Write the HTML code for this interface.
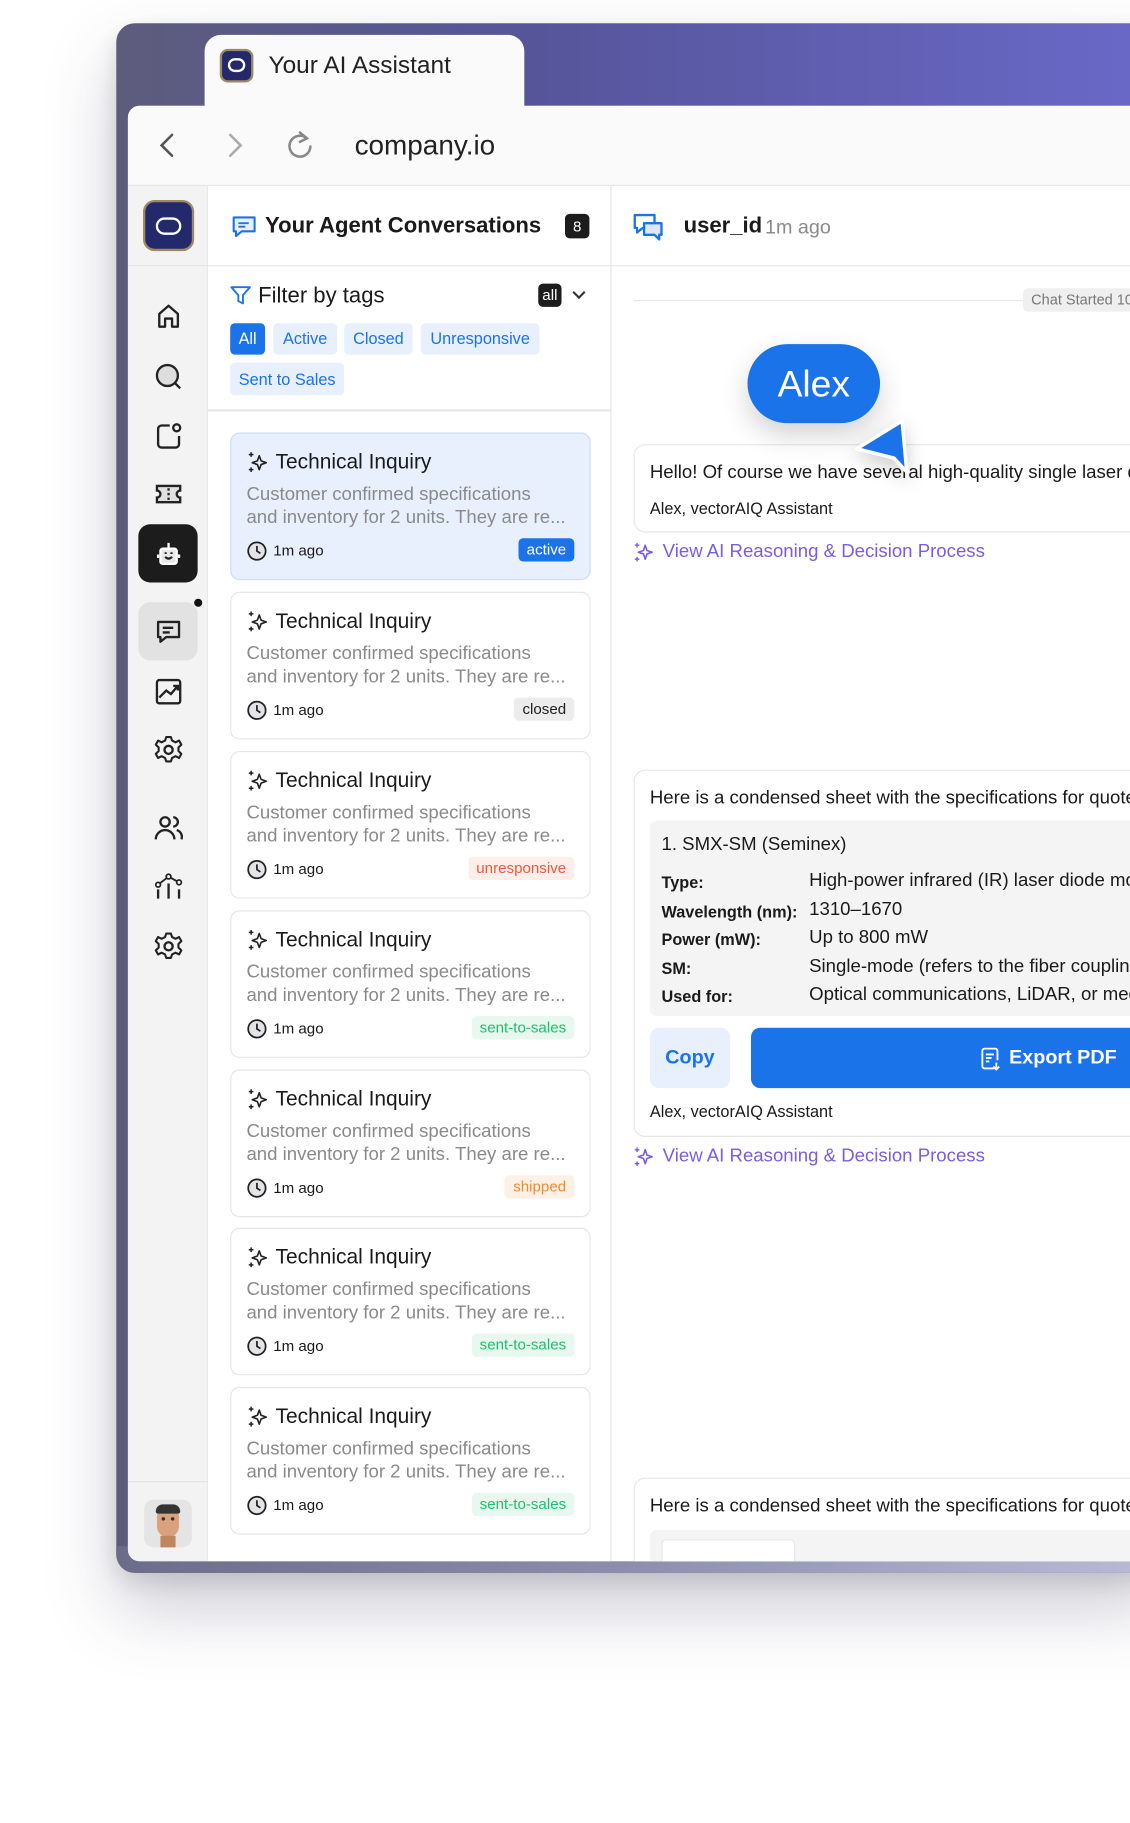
<!DOCTYPE html>
<html><head><meta charset="utf-8"><style>
*{box-sizing:border-box;margin:0;padding:0}
html,body{width:1130px;height:1822px;overflow:hidden;background:#fff;font-family:"Liberation Sans",sans-serif;color:#1a1a1a}
#w{position:absolute;left:0;top:0;width:972px;height:1568px;transform:scale(1.16255);transform-origin:0 0}
.a{position:absolute}
.frame{left:100px;top:20px;width:900px;height:1333px;border-radius:16px;background:linear-gradient(90deg,#5d5c7c 0%,#56559a 40%,#6a69c9 100%);box-shadow:0 30px 60px rgba(60,60,90,.25),0 8px 20px rgba(0,0,0,.12)}
.frameb{left:100px;top:1330px;width:900px;height:23px;border-radius:0 0 16px 16px;background:linear-gradient(90deg,#6b6b8a,#8e8fb0 50%,#b9bbd6)}
.tab{left:176px;top:30px;width:275px;height:64px;background:#fafafa;border-radius:14px 14px 0 0}
.win{left:110px;top:91px;width:900px;height:1252px;background:#fff;border-radius:10px 0 0 10px;overflow:hidden}
.addr{left:0;top:0;width:900px;height:69px;background:#fafafa;border-bottom:1px solid #e6e6e6}
.side{left:0;top:69px;width:69px;height:1183px;background:#f3f3f3;border-right:1px solid #e8e8e8}
.ic{position:absolute;left:22px;width:26px;height:26px}
.conv{left:69px;top:69px;width:347px;height:1183px;border-right:1px solid #e6e6e6;background:#fff}
.tag{position:absolute;height:27px;border-radius:4px;background:#e8f0fe;color:#1a73e8;font-size:14px;line-height:27px;text-align:center}
.card{position:absolute;left:19px;width:310px;height:127px;border:1.5px solid #e6e6e6;border-radius:8px;background:#fff}
.card .t{position:absolute;left:38px;top:14px;font-size:18px}
.card .d{position:absolute;left:13px;top:43px;font-size:16px;color:#8a8a8a;line-height:19.5px;width:295px;white-space:nowrap}
.card .f{position:absolute;left:36px;top:93px;font-size:13px}
.card .b{position:absolute;right:13px;top:90px;height:20px;padding:0 7px;border-radius:4px;font-size:13px;line-height:20px}
.card svg{position:absolute}
.s1{left:13px;top:15px}.s2{left:13px;top:92px}
.chat{left:416px;top:69px;width:500px;height:1183px}
.msg{position:absolute;left:19px;width:480px;border:1.5px solid #e6e6e6;border-radius:10px;background:#fff}
.vr{position:absolute;left:44px;font-size:16px;color:#7b5ce0}
</style></head><body><div id="w">
<svg width="0" height="0" style="position:absolute"><defs>
<symbol id="sp" viewBox="0 0 20 20"><path d="M11 4l1.6 4.4L17 10l-4.4 1.6L11 16l-1.6-4.4L5 10l4.4-1.6z" fill="none" stroke="#222" stroke-width="1.4" stroke-linejoin="round"/><path d="M4 1v4M2 3h4M4 14v4M2 16h4" stroke="#222" stroke-width="1.3"/></symbol>
<symbol id="ck" viewBox="0 0 18 18"><circle cx="9" cy="9" r="7.5" fill="#e4e4e8" stroke="#222" stroke-width="1.5"/><path d="M9 4.5V9l3 2" fill="none" stroke="#222" stroke-width="1.5"/></symbol>
</defs></svg>
<div class="a frame"></div>
<div class="a frameb"></div>
<div class="a tab"></div>
<div class="a" style="left:189px;top:42px;width:29px;height:29px;border-radius:7px;background:#23296a;border:2px solid #9c8a66"></div>
<div class="a" style="left:196px;top:50px;width:15px;height:12px;border:2px solid #fff;border-radius:7px"></div>
<div class="a" style="left:231px;top:45px;font-size:21px;color:#222">Your AI Assistant</div>
<div class="a win">
 <div class="a addr"></div>
 <svg class="a" style="left:24px;top:22px" width="20" height="24" viewBox="0 0 20 24"><path d="M14 3 L5 12 L14 21" fill="none" stroke="#555" stroke-width="2.2" stroke-linecap="round"/></svg>
 <svg class="a" style="left:82px;top:22px" width="20" height="24" viewBox="0 0 20 24"><path d="M6 3 L15 12 L6 21" fill="none" stroke="#aaa" stroke-width="2.2" stroke-linecap="round"/></svg>
 <svg class="a" style="left:134px;top:20px" width="28" height="28" viewBox="0 0 28 28"><path d="M20 8 A9 9 0 1 0 23 15" fill="none" stroke="#888" stroke-width="2.2" stroke-linecap="round"/><path d="M14 3 L20 8 L14 11" fill="none" stroke="#888" stroke-width="2.2" stroke-linecap="round"/></svg>
 <div class="a" style="left:195px;top:21px;font-size:24px;color:#222">company.io</div>

 <div class="a side">
  <div class="a" style="left:13px;top:12px;width:44px;height:44px;border-radius:10px;background:#23296a;border:2px solid #9c8a66"></div>
  <div class="a" style="left:24px;top:27px;width:22px;height:15px;border:2.5px double #fff;border-radius:8px"></div>
  <div class="a" style="left:0;top:68px;width:69px;height:1px;background:#e4e4e4"></div>
  <svg class="ic" style="top:99px" viewBox="0 0 26 26"><path d="M5 22V11L13 4L21 11V22H16V15H10V22Z" fill="none" stroke="#222" stroke-width="2" stroke-linejoin="round"/></svg>
  <svg class="ic" style="top:151px" viewBox="0 0 26 26"><circle cx="12" cy="12" r="9" fill="#ddd" stroke="#222" stroke-width="2"/><path d="M18.5 18.5L23 23" stroke="#222" stroke-width="2"/></svg>
  <svg class="ic" style="top:202px" viewBox="0 0 26 26"><path d="M14 4H7a3 3 0 0 0-3 3v13a3 3 0 0 0 3 3h12a3 3 0 0 0 3-3v-7" fill="none" stroke="#222" stroke-width="2"/><circle cx="20" cy="6" r="3" fill="none" stroke="#222" stroke-width="2"/></svg>
  <svg class="ic" style="top:252px" viewBox="0 0 26 26"><path d="M3 6h20v4a3 3 0 0 0 0 6v4H3v-4a3 3 0 0 0 0-6z" fill="#e0e0e0" stroke="#222" stroke-width="2"/><path d="M13 8v2M13 12v2M13 16v2" stroke="#222" stroke-width="2"/></svg>
  <div class="a" style="left:9px;top:291px;width:51px;height:50px;border-radius:10px;background:#1c1c1c"></div>
  <svg class="ic" style="top:303px" viewBox="0 0 26 26"><rect x="6" y="9" width="14" height="13" rx="2" fill="#e8e8e8" stroke="#fff" stroke-width="2"/><path d="M13 4v5M4 14v3M22 14v3" stroke="#fff" stroke-width="2"/><path d="M10 16q3 3 6 0" stroke="#222" fill="none" stroke-width="1.8"/><path d="M10.5 12v1.5M15.5 12v1.5" stroke="#222" stroke-width="1.8"/></svg>
  <div class="a" style="left:9px;top:358px;width:51px;height:50px;border-radius:10px;background:#e2e2e2"></div>
  <div class="a" style="left:56px;top:354px;width:9px;height:9px;border-radius:50%;background:#111;border:1.5px solid #f3f3f3"></div>
  <svg class="ic" style="top:370px" viewBox="0 0 26 26"><path d="M4 5h18v13H11l-5 4v-4H4z" fill="none" stroke="#222" stroke-width="2" stroke-linejoin="round"/><path d="M8 10h9M8 14h6" stroke="#222" stroke-width="2"/></svg>
  <svg class="ic" style="top:422px" viewBox="0 0 26 26"><rect x="3" y="3" width="20" height="20" rx="2" fill="none" stroke="#222" stroke-width="2"/><path d="M5 18l6-6 4 3 6-7M17 8h4v4" fill="none" stroke="#222" stroke-width="2"/></svg>
  <svg class="ic" style="top:472px" viewBox="0 0 26 26"><circle cx="13" cy="13" r="3.5" fill="none" stroke="#222" stroke-width="2"/><path d="M11 2h4l1 3 3 1.5 3-1.5 2 3.5-2.5 2.5v3l2.5 2.5-2 3.5-3-1.5-3 1.5-1 3h-4l-1-3-3-1.5-3 1.5-2-3.5 2.5-2.5v-3L2 8.5 4 5l3 1.5L10 5z" fill="none" stroke="#222" stroke-width="1.8" stroke-linejoin="round"/></svg>
  <svg class="ic" style="top:539px" viewBox="0 0 26 26"><circle cx="10" cy="8" r="4" fill="none" stroke="#222" stroke-width="2"/><path d="M2 23a8 8 0 0 1 16 0M17 4a4 4 0 0 1 0 8M20 15a6 6 0 0 1 4 8" fill="none" stroke="#222" stroke-width="2"/></svg>
  <svg class="ic" style="top:590px" viewBox="0 0 26 26"><path d="M4 15v8M13 10v13M22 15v8" stroke="#222" stroke-width="2"/><path d="M4 11L13 4L22 9" fill="none" stroke="#222" stroke-width="1.6"/><circle cx="4" cy="11" r="2" fill="#fff" stroke="#222" stroke-width="1.5"/><circle cx="13" cy="4" r="2" fill="#fff" stroke="#222" stroke-width="1.5"/><circle cx="22" cy="9" r="2" fill="#fff" stroke="#222" stroke-width="1.5"/></svg>
  <svg class="ic" style="top:641px" viewBox="0 0 26 26"><circle cx="13" cy="13" r="3.5" fill="none" stroke="#222" stroke-width="2"/><path d="M11 2h4l1 3 3 1.5 3-1.5 2 3.5-2.5 2.5v3l2.5 2.5-2 3.5-3-1.5-3 1.5-1 3h-4l-1-3-3-1.5-3 1.5-2-3.5 2.5-2.5v-3L2 8.5 4 5l3 1.5L10 5z" fill="none" stroke="#222" stroke-width="1.8" stroke-linejoin="round"/></svg>
  <div class="a" style="left:0;top:1114px;width:69px;height:1px;background:#e4e4e4"></div>
  <div class="a" style="left:14px;top:1130px;width:41px;height:41px;border-radius:8px;background:#e4e4e4;overflow:hidden">
   <div class="a" style="left:11px;top:6px;width:19px;height:26px;border-radius:9px;background:#d9a27c"></div>
   <div class="a" style="left:10px;top:4px;width:21px;height:8px;border-radius:10px 10px 3px 3px;background:#333"></div>
   <div class="a" style="left:15px;top:15px;width:3px;height:3px;border-radius:50%;background:#333"></div>
   <div class="a" style="left:23px;top:15px;width:3px;height:3px;border-radius:50%;background:#333"></div>
   <div class="a" style="left:14px;top:31px;width:13px;height:12px;background:#c0855f"></div>
  </div>
 </div>

 <div class="a conv">
  <svg class="a" style="left:20px;top:24px" width="22" height="22" viewBox="0 0 22 22"><path d="M2 3h18v12H9l-5 4v-4H2z" fill="#e8f0fe" stroke="#1a73e8" stroke-width="1.8" stroke-linejoin="round"/><path d="M6 8h9M6 11h6" stroke="#1a73e8" stroke-width="1.6"/></svg>
  <div class="a" style="left:49px;top:24px;font-size:19px;font-weight:bold">Your Agent Conversations</div>
  <div class="a" style="left:307px;top:24px;width:21px;height:21px;border-radius:4px;background:#1c1c1c;color:#fff;font-size:13px;line-height:21px;text-align:center">8</div>
  <div class="a" style="left:0;top:68px;width:347px;height:1px;background:#e6e6e6"></div>
  <svg class="a" style="left:19px;top:85px" width="18" height="18" viewBox="0 0 18 18"><path d="M1 2h16l-6 7v7l-4-2V9z" fill="none" stroke="#1a73e8" stroke-width="1.6" stroke-linejoin="round"/></svg>
  <div class="a" style="left:43px;top:84px;font-size:19px">Filter by tags</div>
  <div class="a" style="left:284px;top:84px;width:20px;height:20px;border-radius:4px;background:#1c1c1c;color:#fff;font-size:13px;line-height:20px;text-align:center">all</div>
  <svg class="a" style="left:312px;top:89px" width="14" height="10" viewBox="0 0 14 10"><path d="M2 2l5 5 5-5" fill="none" stroke="#333" stroke-width="1.8"/></svg>
  <div class="tag" style="left:19px;top:118px;width:30px;background:#1a73e8;color:#fff">All</div>
  <div class="tag" style="left:56px;top:118px;width:55px">Active</div>
  <div class="tag" style="left:117px;top:118px;width:59px">Closed</div>
  <div class="tag" style="left:183px;top:118px;width:102px">Unresponsive</div>
  <div class="tag" style="left:19px;top:152px;width:98px;height:28px;line-height:28px">Sent to Sales</div>
  <div class="a" style="left:0;top:192px;width:347px;height:1.5px;background:#e6e6e6"></div>

  <div class="card" style="top:212px;background:#e8f0fe;border-color:#c9dbfb"><svg class="s1" width="20" height="20"><use href="#sp"/></svg><div class="t">Technical Inquiry</div><div class="d">Customer confirmed specifications<br>and inventory for 2 units. They are re...</div><svg class="s2" width="18" height="18"><use href="#ck"/></svg><div class="f">1m ago</div><div class="b" style="background:#1a73e8;color:#fff">active</div></div>
  <div class="card" style="top:349px"><svg class="s1" width="20" height="20"><use href="#sp"/></svg><div class="t">Technical Inquiry</div><div class="d">Customer confirmed specifications<br>and inventory for 2 units. They are re...</div><svg class="s2" width="18" height="18"><use href="#ck"/></svg><div class="f">1m ago</div><div class="b" style="background:#ececec;color:#222">closed</div></div>
  <div class="card" style="top:486px"><svg class="s1" width="20" height="20"><use href="#sp"/></svg><div class="t">Technical Inquiry</div><div class="d">Customer confirmed specifications<br>and inventory for 2 units. They are re...</div><svg class="s2" width="18" height="18"><use href="#ck"/></svg><div class="f">1m ago</div><div class="b" style="background:#fdeeea;color:#ef5a3c">unresponsive</div></div>
  <div class="card" style="top:623px"><svg class="s1" width="20" height="20"><use href="#sp"/></svg><div class="t">Technical Inquiry</div><div class="d">Customer confirmed specifications<br>and inventory for 2 units. They are re...</div><svg class="s2" width="18" height="18"><use href="#ck"/></svg><div class="f">1m ago</div><div class="b" style="background:#e7f8ef;color:#20c06a">sent-to-sales</div></div>
  <div class="card" style="top:760px"><svg class="s1" width="20" height="20"><use href="#sp"/></svg><div class="t">Technical Inquiry</div><div class="d">Customer confirmed specifications<br>and inventory for 2 units. They are re...</div><svg class="s2" width="18" height="18"><use href="#ck"/></svg><div class="f">1m ago</div><div class="b" style="background:#fdf0e6;color:#f28b2c">shipped</div></div>
  <div class="card" style="top:896px"><svg class="s1" width="20" height="20"><use href="#sp"/></svg><div class="t">Technical Inquiry</div><div class="d">Customer confirmed specifications<br>and inventory for 2 units. They are re...</div><svg class="s2" width="18" height="18"><use href="#ck"/></svg><div class="f">1m ago</div><div class="b" style="background:#e7f8ef;color:#20c06a">sent-to-sales</div></div>
  <div class="card" style="top:1033px"><svg class="s1" width="20" height="20"><use href="#sp"/></svg><div class="t">Technical Inquiry</div><div class="d">Customer confirmed specifications<br>and inventory for 2 units. They are re...</div><svg class="s2" width="18" height="18"><use href="#ck"/></svg><div class="f">1m ago</div><div class="b" style="background:#e7f8ef;color:#20c06a">sent-to-sales</div></div>
 </div>

 <div class="a chat">
  <svg class="a" style="left:18px;top:22px" width="28" height="26" viewBox="0 0 28 26"><path d="M2 3h17v11H9l-5 4v-4H2z" fill="#fff" stroke="#1a73e8" stroke-width="2" stroke-linejoin="round"/><path d="M10 10h15v10h-2v4l-4-4h-9z" fill="#dfe8fa" stroke="#1a73e8" stroke-width="2" stroke-linejoin="round"/></svg>
  <div class="a" style="left:62px;top:24px;font-size:19px;font-weight:bold">user_id</div>
  <div class="a" style="left:132px;top:26px;font-size:17px;color:#8a8a8a">1m ago</div>
  <div class="a" style="left:0;top:68px;width:500px;height:1px;background:#e6e6e6"></div>
  <div class="a" style="left:19px;top:98px;width:335px;height:1px;background:#e6e6e6"></div>
  <div class="a" style="left:354px;top:88px;width:150px;height:20px;border-radius:4px;background:#efefef;color:#777;font-size:12.5px;line-height:20px;padding-left:7px;white-space:nowrap">Chat Started 10:42</div>

  <div class="msg" style="top:222px;height:76px">
   <div class="a" style="left:13px;top:15px;font-size:16px;white-space:nowrap">Hello! Of course we have several high-quality single laser diodes</div>
   <div class="a" style="left:13px;top:46px;font-size:14px">Alex, vectorAIQ Assistant</div>
  </div>
  <svg class="a" style="left:19px;top:306px" width="18" height="18" viewBox="0 0 18 18"><path d="M10 3l1.5 4.5L16 9l-4.5 1.5L10 15l-1.5-4.5L4 9l4.5-1.5z" fill="none" stroke="#7b5ce0" stroke-width="1.4" stroke-linejoin="round"/><path d="M3 1v4M1 3h4M3 13v4M1 15h4" stroke="#7b5ce0" stroke-width="1.2"/></svg>
  <div class="vr" style="top:306px">View AI Reasoning &amp; Decision Process</div>

  <div class="a" style="left:117px;top:136px;width:114px;height:68px;border-radius:34px;background:#1a73e8;color:#fff;font-size:32px;line-height:68px;text-align:center;box-shadow:0 10px 24px rgba(0,0,0,.18)">Alex</div>
  <svg class="a" style="left:205px;top:198px;filter:drop-shadow(0 6px 8px rgba(0,0,0,.2))" width="56" height="56" viewBox="0 0 56 56"><path d="M45 4 L49 48 L38 36 L6 28 Z" fill="#1a73e8" stroke="#fff" stroke-width="3" stroke-linejoin="round"/></svg>

  <div class="msg" style="top:502px;height:316px">
   <div class="a" style="left:13px;top:15px;font-size:16px;white-space:nowrap">Here is a condensed sheet with the specifications for quoted</div>
   <div class="a" style="left:13px;top:43px;width:470px;height:168px;background:#f4f4f4;border-radius:6px">
    <div class="a" style="left:10px;top:12px;font-size:16px">1. SMX-SM (Seminex)</div>
    <div class="a" style="left:10px;top:41px;font-size:14px;font-weight:bold;line-height:24.5px">Type:<br>Wavelength (nm):<br>Power (mW):<br>SM:<br>Used for:</div>
    <div class="a" style="left:137px;top:40px;font-size:16px;line-height:24.5px;white-space:nowrap">High-power infrared (IR) laser diode module<br>1310–1670<br>Up to 800 mW<br>Single-mode (refers to the fiber coupling)<br>Optical communications, LiDAR, or medical</div>
   </div>
   <div class="a" style="left:13px;top:221px;width:69px;height:52px;border-radius:8px;background:#e8f0fe;color:#1a73e8;font-size:17px;font-weight:bold;line-height:52px;text-align:center">Copy</div>
   <div class="a" style="left:100px;top:221px;width:400px;height:52px;border-radius:8px;background:#1a73e8"></div>
   <svg class="a" style="left:297px;top:238px" width="18" height="20" viewBox="0 0 18 20"><path d="M12 18H4a2 2 0 0 1-2-2V3a2 2 0 0 1 2-2h9a2 2 0 0 1 2 2v8" fill="none" stroke="#fff" stroke-width="1.6"/><path d="M5 6h7M5 9h5M5 12h3M14 13v6M11.5 16.5L14 19l2.5-2.5" fill="none" stroke="#fff" stroke-width="1.6"/></svg>
   <div class="a" style="left:322px;top:237px;font-size:17px;font-weight:bold;color:#fff">Export PDF</div>
   <div class="a" style="left:13px;top:285px;font-size:14px">Alex, vectorAIQ Assistant</div>
  </div>
  <svg class="a" style="left:19px;top:826px" width="18" height="18" viewBox="0 0 18 18"><path d="M10 3l1.5 4.5L16 9l-4.5 1.5L10 15l-1.5-4.5L4 9l4.5-1.5z" fill="none" stroke="#7b5ce0" stroke-width="1.4" stroke-linejoin="round"/><path d="M3 1v4M1 3h4M3 13v4M1 15h4" stroke="#7b5ce0" stroke-width="1.2"/></svg>
  <div class="vr" style="top:826px">View AI Reasoning &amp; Decision Process</div>

  <div class="msg" style="top:1111px;height:100px">
   <div class="a" style="left:13px;top:15px;font-size:16px;white-space:nowrap">Here is a condensed sheet with the specifications for quoted</div>
   <div class="a" style="left:13px;top:44px;width:470px;height:60px;background:#f4f4f4;border-radius:6px">
    <div class="a" style="left:10px;top:8px;width:115px;height:40px;background:#fff;border:1px solid #e6e6e6;border-radius:4px"></div>
   </div>
  </div>
 </div>
</div>
</div></body></html>
